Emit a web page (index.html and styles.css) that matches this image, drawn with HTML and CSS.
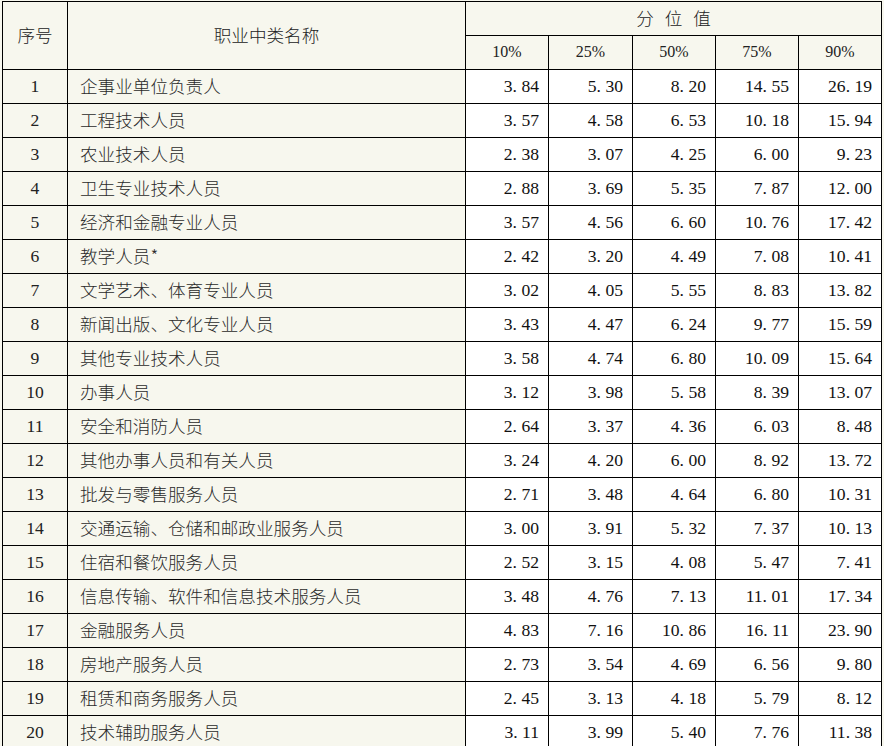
FILE: index.html
```html
<!DOCTYPE html>
<html lang="zh-CN">
<head>
<meta charset="utf-8">
<title>职业中类分位值</title>
<link rel="stylesheet" href="styles.css">
</head>
<body>
<table class="wage">
  <colgroup>
    <col class="c-no">
    <col class="c-name">
    <col class="c-v1">
    <col class="c-v2">
    <col class="c-v3">
    <col class="c-v4">
    <col class="c-v5">
  </colgroup>
  <thead>
    <tr>
      <th rowspan="2" class="h-cn">序号</th>
      <th rowspan="2" class="h-cn">职业中类名称</th>
      <th colspan="5" class="h-cn h-group">分位值</th>
    </tr>
    <tr>
      <th class="h-pct">10%</th>
      <th class="h-pct">25%</th>
      <th class="h-pct">50%</th>
      <th class="h-pct">75%</th>
      <th class="h-pct">90%</th>
    </tr>
  </thead>
  <tbody>
    <tr><td class="no">1</td><td class="name">企事业单位负责人</td><td class="v">3<span class="pt">.</span>84</td><td class="v">5<span class="pt">.</span>30</td><td class="v">8<span class="pt">.</span>20</td><td class="v">14<span class="pt">.</span>55</td><td class="v">26<span class="pt">.</span>19</td></tr>
    <tr><td class="no">2</td><td class="name">工程技术人员</td><td class="v">3<span class="pt">.</span>57</td><td class="v">4<span class="pt">.</span>58</td><td class="v">6<span class="pt">.</span>53</td><td class="v">10<span class="pt">.</span>18</td><td class="v">15<span class="pt">.</span>94</td></tr>
    <tr><td class="no">3</td><td class="name">农业技术人员</td><td class="v">2<span class="pt">.</span>38</td><td class="v">3<span class="pt">.</span>07</td><td class="v">4<span class="pt">.</span>25</td><td class="v">6<span class="pt">.</span>00</td><td class="v">9<span class="pt">.</span>23</td></tr>
    <tr><td class="no">4</td><td class="name">卫生专业技术人员</td><td class="v">2<span class="pt">.</span>88</td><td class="v">3<span class="pt">.</span>69</td><td class="v">5<span class="pt">.</span>35</td><td class="v">7<span class="pt">.</span>87</td><td class="v">12<span class="pt">.</span>00</td></tr>
    <tr><td class="no">5</td><td class="name">经济和金融专业人员</td><td class="v">3<span class="pt">.</span>57</td><td class="v">4<span class="pt">.</span>56</td><td class="v">6<span class="pt">.</span>60</td><td class="v">10<span class="pt">.</span>76</td><td class="v">17<span class="pt">.</span>42</td></tr>
    <tr><td class="no">6</td><td class="name">教学人员*</td><td class="v">2<span class="pt">.</span>42</td><td class="v">3<span class="pt">.</span>20</td><td class="v">4<span class="pt">.</span>49</td><td class="v">7<span class="pt">.</span>08</td><td class="v">10<span class="pt">.</span>41</td></tr>
    <tr><td class="no">7</td><td class="name">文学艺术、体育专业人员</td><td class="v">3<span class="pt">.</span>02</td><td class="v">4<span class="pt">.</span>05</td><td class="v">5<span class="pt">.</span>55</td><td class="v">8<span class="pt">.</span>83</td><td class="v">13<span class="pt">.</span>82</td></tr>
    <tr><td class="no">8</td><td class="name">新闻出版、文化专业人员</td><td class="v">3<span class="pt">.</span>43</td><td class="v">4<span class="pt">.</span>47</td><td class="v">6<span class="pt">.</span>24</td><td class="v">9<span class="pt">.</span>77</td><td class="v">15<span class="pt">.</span>59</td></tr>
    <tr><td class="no">9</td><td class="name">其他专业技术人员</td><td class="v">3<span class="pt">.</span>58</td><td class="v">4<span class="pt">.</span>74</td><td class="v">6<span class="pt">.</span>80</td><td class="v">10<span class="pt">.</span>09</td><td class="v">15<span class="pt">.</span>64</td></tr>
    <tr><td class="no">10</td><td class="name">办事人员</td><td class="v">3<span class="pt">.</span>12</td><td class="v">3<span class="pt">.</span>98</td><td class="v">5<span class="pt">.</span>58</td><td class="v">8<span class="pt">.</span>39</td><td class="v">13<span class="pt">.</span>07</td></tr>
    <tr><td class="no">11</td><td class="name">安全和消防人员</td><td class="v">2<span class="pt">.</span>64</td><td class="v">3<span class="pt">.</span>37</td><td class="v">4<span class="pt">.</span>36</td><td class="v">6<span class="pt">.</span>03</td><td class="v">8<span class="pt">.</span>48</td></tr>
    <tr><td class="no">12</td><td class="name">其他办事人员和有关人员</td><td class="v">3<span class="pt">.</span>24</td><td class="v">4<span class="pt">.</span>20</td><td class="v">6<span class="pt">.</span>00</td><td class="v">8<span class="pt">.</span>92</td><td class="v">13<span class="pt">.</span>72</td></tr>
    <tr><td class="no">13</td><td class="name">批发与零售服务人员</td><td class="v">2<span class="pt">.</span>71</td><td class="v">3<span class="pt">.</span>48</td><td class="v">4<span class="pt">.</span>64</td><td class="v">6<span class="pt">.</span>80</td><td class="v">10<span class="pt">.</span>31</td></tr>
    <tr><td class="no">14</td><td class="name">交通运输、仓储和邮政业服务人员</td><td class="v">3<span class="pt">.</span>00</td><td class="v">3<span class="pt">.</span>91</td><td class="v">5<span class="pt">.</span>32</td><td class="v">7<span class="pt">.</span>37</td><td class="v">10<span class="pt">.</span>13</td></tr>
    <tr><td class="no">15</td><td class="name">住宿和餐饮服务人员</td><td class="v">2<span class="pt">.</span>52</td><td class="v">3<span class="pt">.</span>15</td><td class="v">4<span class="pt">.</span>08</td><td class="v">5<span class="pt">.</span>47</td><td class="v">7<span class="pt">.</span>41</td></tr>
    <tr><td class="no">16</td><td class="name">信息传输、软件和信息技术服务人员</td><td class="v">3<span class="pt">.</span>48</td><td class="v">4<span class="pt">.</span>76</td><td class="v">7<span class="pt">.</span>13</td><td class="v">11<span class="pt">.</span>01</td><td class="v">17<span class="pt">.</span>34</td></tr>
    <tr><td class="no">17</td><td class="name">金融服务人员</td><td class="v">4<span class="pt">.</span>83</td><td class="v">7<span class="pt">.</span>16</td><td class="v">10<span class="pt">.</span>86</td><td class="v">16<span class="pt">.</span>11</td><td class="v">23<span class="pt">.</span>90</td></tr>
    <tr><td class="no">18</td><td class="name">房地产服务人员</td><td class="v">2<span class="pt">.</span>73</td><td class="v">3<span class="pt">.</span>54</td><td class="v">4<span class="pt">.</span>69</td><td class="v">6<span class="pt">.</span>56</td><td class="v">9<span class="pt">.</span>80</td></tr>
    <tr><td class="no">19</td><td class="name">租赁和商务服务人员</td><td class="v">2<span class="pt">.</span>45</td><td class="v">3<span class="pt">.</span>13</td><td class="v">4<span class="pt">.</span>18</td><td class="v">5<span class="pt">.</span>79</td><td class="v">8<span class="pt">.</span>12</td></tr>
    <tr><td class="no">20</td><td class="name">技术辅助服务人员</td><td class="v">3<span class="pt">.</span>11</td><td class="v">3<span class="pt">.</span>99</td><td class="v">5<span class="pt">.</span>40</td><td class="v">7<span class="pt">.</span>76</td><td class="v">11<span class="pt">.</span>38</td></tr>
  </tbody>
</table>
</body>
</html>
```

FILE: styles.css
```css
html, body {
  margin: 0;
  padding: 0;
  background: #f7f7ee;
}

body {
  padding: 1px 0 0 2px;
  font-family: "Noto Sans CJK SC", "Liberation Serif", sans-serif;
  font-size: 17.6px;
  color: #222;
}

.wage {
  border-collapse: collapse;
  table-layout: fixed;
  width: 880px;
  background: #f7f7ee;
}

.c-no { width: 65px; }
.c-name { width: 398px; }
.c-v1 { width: 83px; }
.c-v2 { width: 84px; }
.c-v3 { width: 83px; }
.c-v4 { width: 83px; }
.c-v5 { width: 83px; }

.wage th,
.wage td {
  border: 1px solid #000;
  padding: 0 0 2px 0;
  font-weight: normal;
  line-height: 20px;
  white-space: nowrap;
  overflow: hidden;
}

.wage tr {
  height: 34px;
}

.h-cn {
  text-align: center;
  font-family: "Noto Sans CJK SC", sans-serif;
  font-weight: 300 !important;
}

.h-group {
  letter-spacing: 11px;
  padding-left: 11px !important;
}

.h-pct {
  text-align: center;
  font-family: "Liberation Serif", serif;
  font-size: 16px;
}

.no {
  text-align: center;
  font-family: "Liberation Serif", serif;
}

.name {
  padding-left: 12px !important;
  text-align: left;
  font-family: "Noto Sans CJK SC", sans-serif;
  font-weight: 300 !important;
  color: #2a2a2a;
}

.v {
  background: #fff;
  text-align: right;
  padding-right: 9px !important;
  font-family: "Liberation Serif", serif;
  color: #111;
}

.pt {
  letter-spacing: 0.25em;
}
```
